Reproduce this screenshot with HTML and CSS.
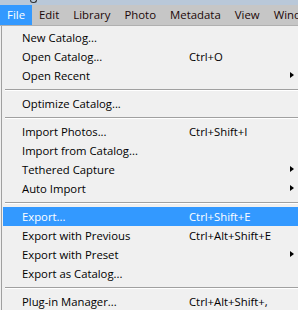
FILE: index.html
```html
<!DOCTYPE html>
<html>
<head>
<meta charset="utf-8">
<link rel="stylesheet" href="styles.css">
</head>
<body>
<div class="titlestrip"><span class="titlemark"></span></div>
<div class="menubar">
  <span class="mb-item active">File</span>
  <span class="mb-item">Edit</span>
  <span class="mb-item">Library</span>
  <span class="mb-item">Photo</span>
  <span class="mb-item">Metadata</span>
  <span class="mb-item">View</span>
  <span class="mb-item">Windo</span>
</div>
<div class="menu">
  <div class="row"><span class="label">New Catalog...</span><span class="key"></span><span class="arrow"></span></div>
  <div class="row"><span class="label">Open Catalog...</span><span class="key">Ctrl+O</span><span class="arrow"></span></div>
  <div class="row"><span class="label">Open Recent</span><span class="key"></span><span class="arrow sub"></span></div>
  <div class="sep"></div>
  <div class="row"><span class="label">Optimize Catalog...</span><span class="key"></span><span class="arrow"></span></div>
  <div class="sep"></div>
  <div class="row"><span class="label">Import Photos...</span><span class="key">Ctrl+Shift+I</span><span class="arrow"></span></div>
  <div class="row"><span class="label">Import from Catalog...</span><span class="key"></span><span class="arrow"></span></div>
  <div class="row"><span class="label">Tethered Capture</span><span class="key"></span><span class="arrow sub"></span></div>
  <div class="row"><span class="label">Auto Import</span><span class="key"></span><span class="arrow sub"></span></div>
  <div class="sep"></div>
  <div class="row hl"><span class="label">Export...</span><span class="key">Ctrl+Shift+E</span><span class="arrow"></span></div>
  <div class="row"><span class="label">Export with Previous</span><span class="key">Ctrl+Alt+Shift+E</span><span class="arrow"></span></div>
  <div class="row"><span class="label">Export with Preset</span><span class="key"></span><span class="arrow sub"></span></div>
  <div class="row"><span class="label">Export as Catalog...</span><span class="key"></span><span class="arrow"></span></div>
  <div class="sep"></div>
  <div class="row"><span class="label">Plug-in Manager...</span><span class="key">Ctrl+Alt+Shift+,</span><span class="arrow"></span></div>
</div>
</body>
</html>
```
FILE: styles.css
```css
html, body {
  margin: 0;
  padding: 0;
  width: 298px;
  height: 310px;
  overflow: hidden;
  background: #f0f0f0;
  font-family: "Open Sans", "DejaVu Sans", sans-serif;
  font-size: 11.3px;
  color: #000;
}
.titlestrip {
  height: 5px;
  background: #b9c8d9;
  overflow: hidden;
  position: relative;
}
.titlemark {
  position: absolute;
  left: 30px;
  top: 0;
  width: 5px;
  height: 2px;
  border: 1.5px solid #333;
  border-top: none;
  border-radius: 0 0 3px 3px;
}
.menubar {
  height: 20px;
  background: #c6c6c6;
  display: flex;
  align-items: center;
  white-space: nowrap;
  border-bottom: 1px solid #b0b0b0;
  overflow: hidden;
}
.mb-item {
  height: 20px;
  line-height: 20px;
  padding: 0 7px;
  color: #1c0808;
  font-size: 11.4px;
  flex: none;
}
.mb-item.active {
  background: #3399ff;
  color: #fff;
}
.menu {
  border-left: 1px solid #a0a0a0;
  margin-left: 1px;
  padding-top: 2px;
  width: 310px;
}
.row {
  display: grid;
  grid-template-columns: 167px 100px 8px;
  height: 19px;
  line-height: 19px;
  padding-left: 19px;
  margin-left: 1px;
  white-space: nowrap;
}
.row.hl {
  background: #3399ff;
  color: #fff;
}
.arrow.sub {
  position: relative;
}
.arrow.sub::after {
  content: "";
  position: absolute;
  left: 1px;
  top: 6px;
  border-left: 4px solid #000;
  border-top: 3.5px solid transparent;
  border-bottom: 3.5px solid transparent;
}
.sep {
  height: 1px;
  background: #a0a0a0;
  margin: 4px 0 3px 3px;
  border-bottom: 1px solid #fff;
}
```
